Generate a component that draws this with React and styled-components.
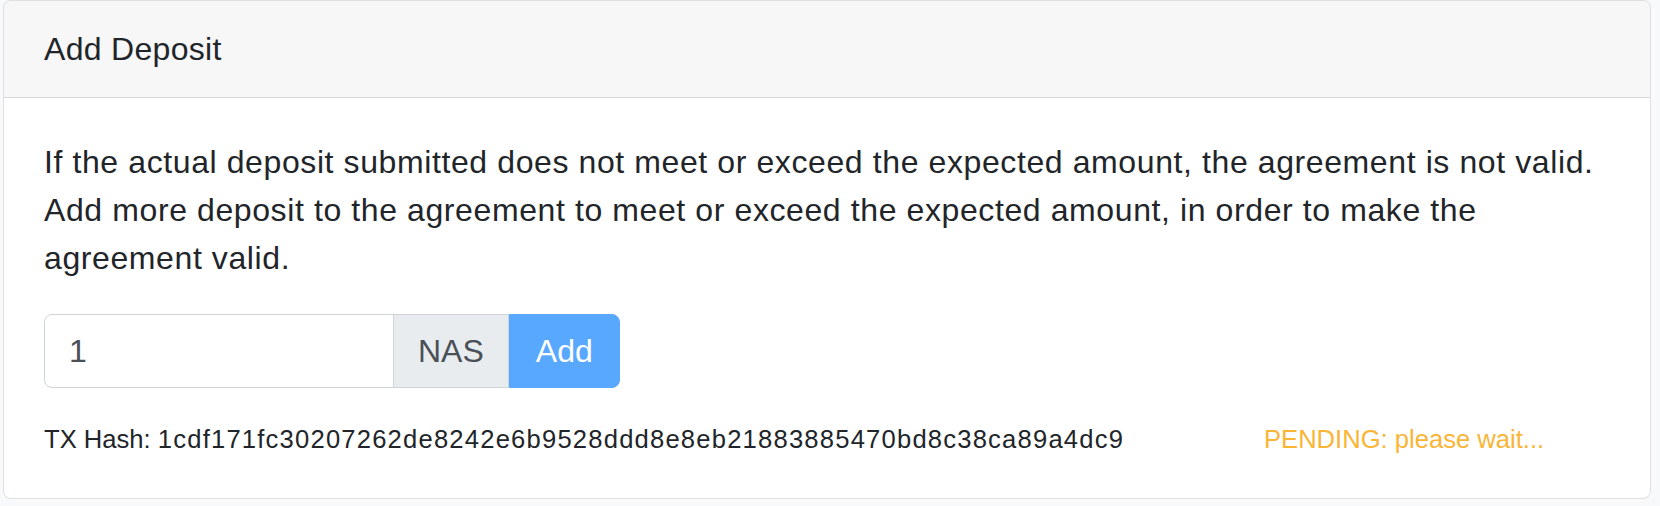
import React, { useState } from "react";
import styled, { createGlobalStyle } from "styled-components";

const GlobalStyle = createGlobalStyle`
  html, body {
    margin: 0;
    padding: 0;
    background: #f8f9fa;
  }
  body {
    font-family: "Liberation Sans", Arial, sans-serif;
    color: #212529;
  }
  * {
    box-sizing: border-box;
  }
`;

const Page = styled.div`
  min-height: 100vh;
  padding: 0 9px 5px 3px;
`;

const Card = styled.section`
  background: #fff;
  border: 1px solid rgba(0, 0, 0, 0.125);
  border-radius: 8px;
  overflow: hidden;
`;

const CardHeader = styled.header`
  background: #f7f7f7;
  border-bottom: 1px solid rgba(0, 0, 0, 0.125);
  padding: 24px 40px;
  font-size: 32px;
  line-height: 48px;
  letter-spacing: 0.3px;
`;

const CardBody = styled.div`
  padding: 40px;
`;

const Text = styled.p`
  margin: 0 0 32px;
  font-size: 32px;
  line-height: 48px;
  letter-spacing: 0.6px;
`;

const InputGroup = styled.div`
  display: flex;
  align-items: stretch;
  height: 74px;
`;

const AmountInput = styled.input`
  width: 350px;
  height: 100%;
  padding: 12px 24px;
  font: inherit;
  font-size: 32px;
  line-height: 48px;
  color: #495057;
  background: #fff;
  border: 1px solid #ced4da;
  border-radius: 8px 0 0 8px;
  outline: none;
`;

const Addon = styled.span`
  display: flex;
  align-items: center;
  margin-left: -1px;
  padding: 0 24px;
  font-size: 32px;
  color: #495057;
  background: #e9ecef;
  border: 1px solid #ced4da;
`;

const AddButton = styled.button`
  padding: 0 26px;
  font: inherit;
  font-size: 32px;
  color: #fff;
  background: #007bff;
  border: 1px solid #007bff;
  border-radius: 0 8px 8px 0;
  opacity: 0.65;
  cursor: default;
`;

const TxRow = styled.div`
  display: grid;
  grid-template-columns: 1fr 346px;
  margin-top: 32px;
  font-size: 25.6px;
  line-height: 38.4px;
`;

const Hash = styled.span`
  letter-spacing: 1.2px;
`;

const Status = styled.span`
  color: ${(p) => (p.$pending ? "#f9b536" : "#28a745")};
`;

export default function App() {
  const [amount, setAmount] = useState("1");
  const hash = "1cdf171fc30207262de8242e6b9528ddd8e8eb21883885470bd8c38ca89a4dc9";

  return (
    <Page>
      <GlobalStyle />
      <Card>
        <CardHeader>Add Deposit</CardHeader>
        <CardBody>
          <Text>
            If the actual deposit submitted does not meet or exceed the expected
            amount, the agreement is not valid. Add more deposit to the
            agreement to meet or exceed the expected amount, in order to make
            the agreement valid.
          </Text>
          <InputGroup>
            <AmountInput
              value={amount}
              onChange={(e) => setAmount(e.target.value)}
            />
            <Addon>NAS</Addon>
            <AddButton disabled>Add</AddButton>
          </InputGroup>
          <TxRow>
            <span>
              TX Hash: <Hash>{hash}</Hash>
            </span>
            <Status $pending>PENDING: please wait...</Status>
          </TxRow>
        </CardBody>
      </Card>
    </Page>
  );
}
